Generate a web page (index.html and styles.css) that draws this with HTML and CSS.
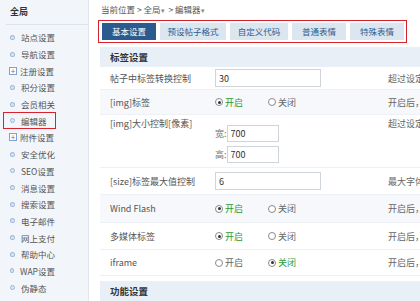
FILE: index.html
```html
<!DOCTYPE html>
<html lang="zh-CN">
<head>
    <meta charset="UTF-8">
    <title>编辑器 - 全局设置</title>
    <link rel="stylesheet" href="styles.css">
</head>
<body>
    <div class="layout">
        <!-- Sidebar -->
        <aside class="sidebar">
            <div class="side-title">全局</div>
            <ul class="side-menu">
                <li><i class="dot"></i>站点设置</li>
                <li><i class="dot"></i>导航设置</li>
                <li class="plus"><i class="box">+</i>注册设置</li>
                <li><i class="dot"></i>积分设置</li>
                <li><i class="dot"></i>会员相关</li>
                <li class="active"><i class="dot"></i>编辑器</li>
                <li class="plus"><i class="box">+</i>附件设置</li>
                <li><i class="dot"></i>安全优化</li>
                <li><i class="dot"></i>SEO设置</li>
                <li><i class="dot"></i>消息设置</li>
                <li><i class="dot"></i>搜索设置</li>
                <li><i class="dot"></i>电子邮件</li>
                <li><i class="dot"></i>网上支付</li>
                <li><i class="dot"></i>帮助中心</li>
                <li><i class="dot"></i>WAP设置</li>
                <li><i class="dot"></i>伪静态</li>
            </ul>
        </aside>

        <main class="content">
            <div class="crumb">当前位置 &gt; 全局<span class="caret">▾</span> &gt; 编辑器<span class="caret">▾</span></div>

            <div class="tabs">
                <a class="tab active">基本设置</a>
                <a class="tab">预设帖子格式</a>
                <a class="tab">自定义代码</a>
                <a class="tab">普通表情</a>
                <a class="tab">特殊表情</a>
            </div>

            <div class="panel">
                <div class="panel-head">标签设置</div>

                <div class="row r1">
                    <div class="label">帖子中标签转换控制</div>
                    <div class="value"><input class="text" type="text" value="30"></div>
                    <div class="tip">超过设定</div>
                </div>

                <div class="row r2 alt">
                    <div class="label">[img]标签</div>
                    <div class="value">
                        <span class="radio on checked"><i></i>开启</span>
                        <span class="radio"><i></i>关闭</span>
                    </div>
                    <div class="tip">开启后，</div>
                </div>

                <div class="row r3 top">
                    <div class="label">[img]大小控制[像素]</div>
                    <div class="value stack">
                        <div class="size-line">宽:<input class="text small" type="text" value="700"></div>
                        <div class="size-line">高:<input class="text small" type="text" value="700"></div>
                    </div>
                    <div class="tip">超过设定</div>
                </div>

                <div class="row r4">
                    <div class="label">[size]标签最大值控制</div>
                    <div class="value"><input class="text" type="text" value="6"></div>
                    <div class="tip">最大字体</div>
                </div>

                <div class="row r5 alt">
                    <div class="label">Wind Flash</div>
                    <div class="value">
                        <span class="radio on checked"><i></i>开启</span>
                        <span class="radio"><i></i>关闭</span>
                    </div>
                    <div class="tip">开启后，</div>
                </div>

                <div class="row r6">
                    <div class="label">多媒体标签</div>
                    <div class="value">
                        <span class="radio on checked"><i></i>开启</span>
                        <span class="radio"><i></i>关闭</span>
                    </div>
                    <div class="tip">开启后，</div>
                </div>

                <div class="row r7">
                    <div class="label">iframe</div>
                    <div class="value">
                        <span class="radio"><i></i>开启</span>
                        <span class="radio on checked"><i></i>关闭</span>
                    </div>
                    <div class="tip">开启后，</div>
                </div>

                <div class="panel-head second">功能设置</div>
            </div>
        </main>
    </div>
</body>
</html>
```

FILE: styles.css
```css
/* General Reset */
* {
    margin: 0;
    padding: 0;
    box-sizing: border-box;
}

body {
    font-family: "Noto Sans CJK SC", "Noto Sans", sans-serif;
    font-size: 8.5px;
    color: #444;
    background-color: #fff;
    overflow: hidden;
}

.layout {
    display: flex;
    min-height: 100vh;
}

/* Sidebar */
.sidebar {
    width: 89px;
    flex-shrink: 0;
    background-color: #f2f5f9;
    border-right: 1px solid #e2e7ee;
}

.side-title {
    height: 25px;
    line-height: 24px;
    margin-left: 6px;
    padding-left: 4px;
    font-size: 9px;
    font-weight: bold;
    color: #333;
    border-bottom: 1px solid #dde3ea;
}

.side-menu {
    list-style: none;
    padding-top: 4px;
}

.side-menu li {
    display: flex;
    align-items: center;
    height: 16.7px;
    margin: 0 32px 0 3px;
    padding-left: 6px;
    color: #555;
    border: 1px solid transparent;
    white-space: nowrap;
}

.side-menu li.active {
    border-color: #d8232f;
}

.side-menu .dot {
    width: 5px;
    height: 5px;
    margin-right: 6px;
    border: 1px solid #9bb6d6;
    border-radius: 50%;
    background-color: #dbe6f2;
}

.side-menu .box {
    width: 8px;
    height: 8px;
    margin: 0 3px 0 -1px;
    border: 1px solid #7ea3cf;
    background-color: #fff;
    color: #4a78b0;
    font-style: normal;
    font-size: 8px;
    line-height: 6px;
    text-align: center;
}

/* Content */
.content {
    flex: 1;
    padding-left: 9px;
    min-width: 0;
}

.crumb {
    height: 20px;
    line-height: 18px;
    padding-left: 3px;
    color: #555;
}

.crumb .caret {
    font-size: 7px;
    color: #888;
    margin-right: 2px;
}

/* Tabs */
.tabs {
    display: flex;
    gap: 4px;
    width: 309px;
    padding: 2px 3px;
    margin-bottom: 4px;
    border: 1px solid #d8232f;
}

.tab {
    flex-shrink: 0;
    height: 17px;
    line-height: 17px;
    text-align: center;
    white-space: nowrap;
    background-color: #dbe6f1;
    color: #2f5d8c;
    cursor: pointer;
}

.tab.active {
    background-color: #2b5b8e;
    color: #fff;
}

.tabs .tab:nth-child(1) { width: 54px; }
.tabs .tab:nth-child(2) { width: 66px; }
.tabs .tab:nth-child(3) { width: 58px; }
.tabs .tab:nth-child(4) { width: 54px; }
.tabs .tab:nth-child(5) { width: 54px; }

/* Panel */
.panel {
    margin-left: 2px;
}

.panel-head {
    height: 20px;
    line-height: 20px;
    padding-left: 10px;
    font-size: 9.5px;
    font-weight: bold;
    color: #333;
    background-color: #e9eff6;
}

.panel-head.second {
    margin-top: 5px;
}

.row {
    display: grid;
    grid-template-columns: 103px 180px 1fr;
    align-items: center;
    border-bottom: 1px solid #edf0f4;
    font-size: 9px;
    color: #555;
}

.row.alt {
    background-color: #f6f8fb;
}

.row.top {
    align-items: start;
}

.r1 { height: 23px; }
.r2 { height: 25px; }
.r3 { height: 53px; }
.r4 { height: 27px; }
.r5 { height: 28px; }
.r6 { height: 27px; }
.r7 { height: 26px; }

.label {
    padding-left: 10px;
    white-space: nowrap;
}

.row.top .label {
    padding-top: 2px;
}

.value {
    padding-left: 12px;
    display: flex;
    align-items: center;
}

.value.stack {
    flex-direction: column;
    align-items: flex-start;
    gap: 4px;
    padding-top: 10px;
}

.tip {
    padding-left: 5px;
    white-space: nowrap;
    color: #666;
}

.row.top .tip {
    padding-top: 2px;
}

.text {
    width: 106px;
    height: 18px;
    padding-left: 3px;
    border: 1px solid #cfd4da;
    font-family: inherit;
    font-size: 9px;
    color: #333;
    outline: none;
}

.text.small {
    width: 52px;
    height: 17px;
}

.size-line {
    display: flex;
    align-items: center;
    color: #777;
}

/* Radio */
.radio {
    display: inline-flex;
    align-items: center;
    width: 53px;
    color: #666;
}

.radio i {
    position: relative;
    width: 8px;
    height: 8px;
    margin-right: 2px;
    border: 1px solid #8a8a8a;
    border-radius: 50%;
    background-color: #fff;
}

.radio.checked i::after {
    content: "";
    position: absolute;
    left: 1.5px;
    top: 1.5px;
    width: 3px;
    height: 3px;
    border-radius: 50%;
    background-color: #333;
}

.radio.on {
    color: #2e9a2e;
}
```
